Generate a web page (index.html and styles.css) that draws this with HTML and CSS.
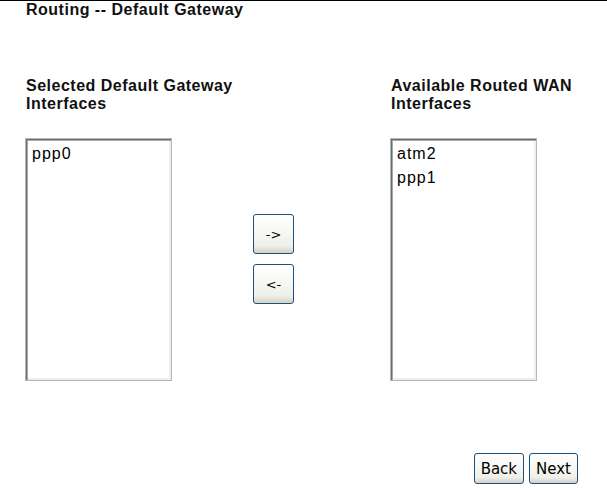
FILE: index.html
```html
<!DOCTYPE html>
<html>
<head>
<meta charset="utf-8">
<link rel="stylesheet" href="styles.css">
</head>
<body>
<div class="page">
  <div class="title">Routing -- Default Gateway</div>
  <div class="cols">
    <div class="col col-left">
      <div class="label">Selected Default Gateway<br>Interfaces</div>
      <div class="listbox"><div class="opt">ppp0</div></div>
    </div>
    <div class="col col-mid">
      <button class="arrow">-&gt;</button>
      <button class="arrow">&lt;-</button>
    </div>
    <div class="col col-right">
      <div class="label">Available Routed WAN<br>Interfaces</div>
      <div class="listbox"><div class="opt">atm2</div><div class="opt">ppp1</div></div>
    </div>
  </div>
  <div class="nav">
    <button class="btn">Back</button>
    <button class="btn">Next</button>
  </div>
</div>
</body>
</html>
```
FILE: styles.css
```css
html, body {
  margin: 0;
  padding: 0;
  background: #ffffff;
}
.page {
  width: 607px;
  height: 490px;
  box-sizing: border-box;
  border-top: 1px solid #000000;
  font-family: "Liberation Sans", Arial, sans-serif;
  color: #000000;
  padding-left: 25px;
}
.title {
  font-weight: bold;
  font-size: 16px;
  letter-spacing: 0.5px;
  line-height: 18px;
  padding-top: 0;
  padding-left: 1px;
  color: #111;
}
.cols {
  display: flex;
  margin-top: 58px;
}
.col-left {
  width: 228px;
}
.col-mid {
  width: 137px;
  display: flex;
  flex-direction: column;
  align-items: flex-start;
  gap: 10px;
  padding-top: 137px;
}
.label {
  font-weight: bold;
  font-size: 16px;
  letter-spacing: 0.5px;
  line-height: 18px;
  padding-left: 1px;
  height: 61px;
  color: #111;
}
.listbox {
  width: 147px;
  height: 243px;
  box-sizing: border-box;
  border: 1px solid #a5b9d1;
  box-shadow: inset 1px 1px #716f64, inset 2px 2px #aca899, inset -1px -1px #f1efe2, inset -2px -2px #f1efe2;
  padding: 3px 6px;
  font-size: 16px;
  letter-spacing: 1px;
  line-height: 24px;
  background: #fff;
}
.arrow {
  width: 41px;
  height: 40px;
  border: 1px solid #1c5180;
  border-radius: 3px;
  background: linear-gradient(#ffffff, #f0f0ea 80%, #d6d0c5);
  font-family: "DejaVu Sans", sans-serif;
  font-size: 13px;
  padding: 0;
  color: #000;
}
.nav {
  display: flex;
  justify-content: flex-end;
  gap: 5px;
  margin-top: 72px;
  padding-right: 29px;
}
.btn {
  height: 31px;
  border: 1px solid #1c5180;
  border-radius: 3px;
  background: linear-gradient(#ffffff, #f0f0ea 80%, #d6d0c5);
  font-family: "DejaVu Sans", sans-serif;
  font-size: 15px;
  padding: 0 6px;
  color: #000;
}
```
